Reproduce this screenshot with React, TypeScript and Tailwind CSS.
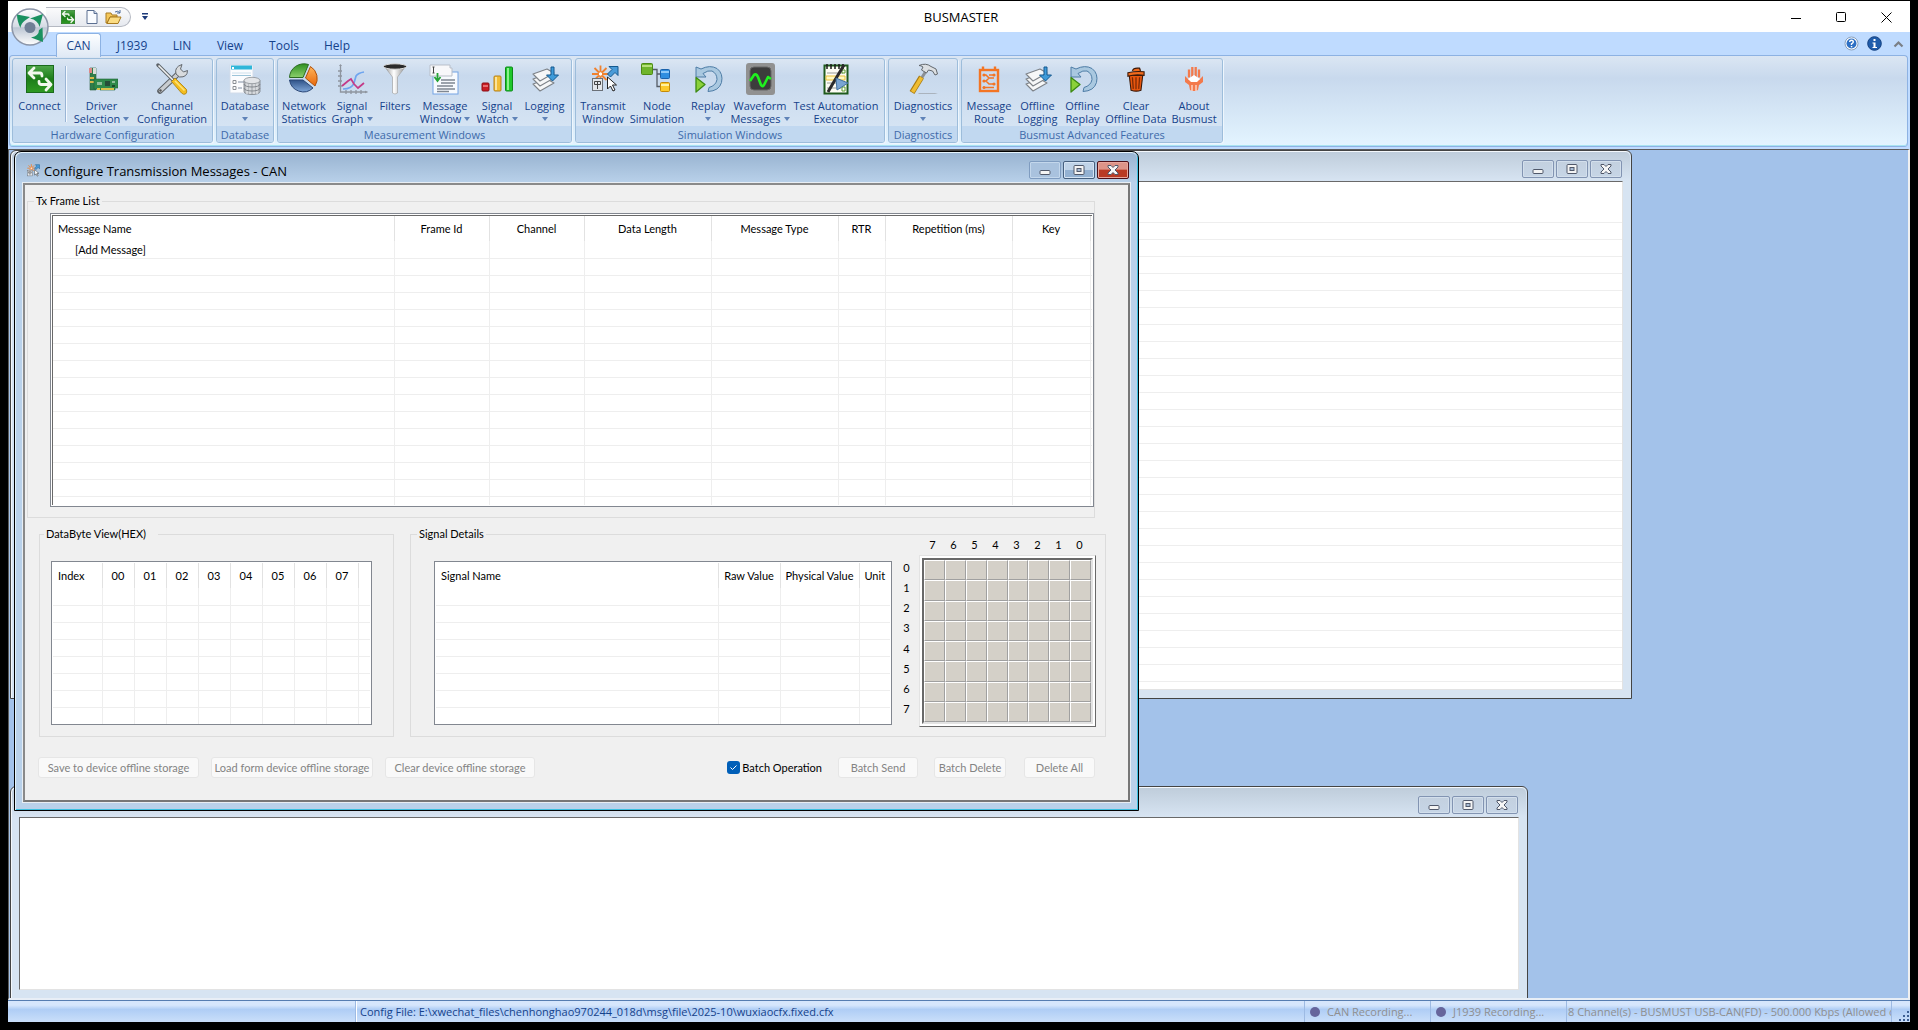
import React from "react";

/* ---------- icons ---------- */

const svgProps = (size: number) => ({ width: size, height: size, viewBox: "0 0 32 32", "aria-hidden": true as const });

function ConnectIcon({ size = 32 }: { size?: number }) {
  return (
    <svg {...svgProps(size)}>
      <defs>
        <linearGradient id="cg" x1="0" y1="0" x2="0" y2="1">
          <stop offset="0" stopColor="#4fa64a" /><stop offset=".5" stopColor="#1c7d1a" /><stop offset="1" stopColor="#2f9a22" />
        </linearGradient>
      </defs>
      <rect x="2.5" y="2.5" width="27" height="27" fill="url(#cg)" stroke="#1a6a1c" />
      <g fill="none" stroke="#f2f8ee" strokeWidth="2.8" strokeLinecap="round" strokeLinejoin="round">
        <path d="M10 5 L5 10 L10 15 M5.500 10 H16 Q18 10 18 13" />
        <path d="M22 16 L27 21.500 L22 27 M26.500 21.500 H17 Q15 21.500 15 18.500" />
      </g>
    </svg>
  );
}

function DriverIcon() {
  return (
    <svg {...svgProps(32)}>
      <path d="M4 5h6v22H4z" fill="#2f7d4b" stroke="#285f3b" strokeWidth=".6" />
      <path d="M3 5h3v5H3z" fill="#d88" /><path d="M7 5h3v6H7z" fill="#d8ded8" />
      <path d="M4 14h4v2H4zM4 18h4v2H4z" fill="#d9b84a" />
      <path d="M8 16h24v9h-3v2H14v-1H8z" fill="#2f8a4b" stroke="#1f6235" strokeWidth=".6" />
      <rect x="19" y="18" width="5" height="5" fill="#264e38" /><rect x="11" y="19" width="5" height="3" fill="#8fbf9a" />
      <rect x="26" y="18" width="3" height="2" fill="#8fbf9a" /><rect x="26" y="22" width="3" height="2" fill="#1b4d2c" />
      <path d="M15 25h13v2H15z" fill="#d9c24a" /><path d="M11 25h3v2h-3z" fill="#d9c24a" />
    </svg>
  );
}

function ToolsIcon() {
  return (
    <svg {...svgProps(32)}>
      <path d="M4 28 L23 10" stroke="#5d6267" strokeWidth="5.600" strokeLinecap="round" />
      <path d="M4.500 27.500 L23 10" stroke="#c8ccd0" strokeWidth="3.600" strokeLinecap="round" />
      <path d="M20 11 q-2-7 6-9.500 l-1.500 4.500 3 3 4-1.500 q0 7-8 6.500z" fill="#d8dbde" stroke="#63686d" />
      <circle cx="4.500" cy="27.500" r="1.200" fill="#555" />
      <path d="M2 2 L17 17" stroke="#5d6267" strokeWidth="3.400" strokeLinecap="round" />
      <path d="M2.500 2.500 L17 17" stroke="#f0f1f2" strokeWidth="1.600" />
      <path d="M15.500 18.500 l3.500-3.500 11.500 11.500 q1 3-1 4.500 q-2 1-4-1z" fill="#f4bd1e" stroke="#a97d0a" strokeWidth=".8" />
      <path d="M19 18 l9.500 9.500" stroke="#fde37a" strokeWidth="1.600" />
    </svg>
  );
}

function DatabaseIcon() {
  return (
    <svg {...svgProps(32)}>
      <rect x="1" y="2" width="23" height="28" fill="#fbfcfe" stroke="#d2dcea" />
      <rect x="2" y="2.500" width="21" height="4" fill="#2fb6d9" /><rect x="3" y="4" width="2" height="2" fill="#fff" />
      <g fill="none" stroke="#9cc4d9"><path d="M3 9.500h19M3 12.500h19" /></g>
      <rect x="3" y="9" width="19" height="2" fill="#e4eef5" />
      <g fill="#fff" stroke="#8a8f95"><path d="M4 17.500h3v3H4zM4 23.500h3v3H4z" /></g>
      <path d="M9 19h7M9 25h4" stroke="#aab4c2" strokeWidth="1.500" />
      <path d="M15 17.500v11c0 4 16 4 16 0v-11z" fill="#b9bdc2" stroke="#7a7f85" strokeWidth=".8" />
      <path d="M18 18v13M21 18v13M25 18v13M28 18v13" stroke="#f4f5f6" strokeWidth="1" />
      <g fill="none" stroke="#7a7f85" strokeWidth=".9"><path d="M15 21c0 4 16 4 16 0M15 25c0 4 16 4 16 0" /></g>
      <ellipse cx="23" cy="17.500" rx="8" ry="3.200" fill="#e3e5e8" stroke="#8b9096" strokeWidth=".8" />
    </svg>
  );
}

function PieIcon() {
  return (
    <svg {...svgProps(32)}>
      <defs>
        <linearGradient id="pg" x1="0" y1="0" x2="0" y2="1"><stop offset="0" stopColor="#2f9020" /><stop offset="1" stopColor="#8bd06c" /></linearGradient>
        <linearGradient id="po" x1="0" y1="0" x2="0" y2="1"><stop offset="0" stopColor="#ffb45a" /><stop offset="1" stopColor="#e8680c" /></linearGradient>
        <linearGradient id="pb" x1="0" y1="0" x2="0" y2="1"><stop offset="0" stopColor="#2f5288" /><stop offset="1" stopColor="#7fa6d8" /></linearGradient>
      </defs>
      <path d="M1.500 14.500 A14.500 14 0 0 1 20.500 1.500 L15 14.500z" fill="url(#pg)" stroke="#2c6a22" />
      <path d="M22.500 3.500 A14 14 0 0 1 27 23 L17.500 15z" fill="url(#po)" stroke="#b0500a" />
      <path d="M1.500 17 H15 L25 25 A14 14 0 0 1 1.500 17z" fill="url(#pb)" stroke="#2a4676" />
    </svg>
  );
}

function GraphIcon() {
  return (
    <svg {...svgProps(32)}>
      <g stroke="#8e959f" fill="none" strokeWidth="1.300">
        <path d="M4.500 2v27h27M2 8h4M2 13h4M2 18h4M2 23h4M10 27v4M15 27v4M20 27v4M25 27v4" />
      </g>
      <path d="M3 3l1.500-2L6 3zM29 27.500l2 1.500-2 1.500z" fill="#8e959f" />
      <path d="M7 26 Q16 26 18 20 L20 13 Q22 10 28 9" stroke="#6ea5ef" strokeWidth="1.700" fill="none" />
      <path d="M6 23 L12 18 L15 16 L18 21 L22 25 L28 20" stroke="#c43a87" strokeWidth="1.700" fill="none" />
    </svg>
  );
}

function FilterIcon() {
  return (
    <svg {...svgProps(32)}>
      <defs>
        <linearGradient id="fg"><stop offset="0" stopColor="#8f8f8f" /><stop offset=".45" stopColor="#fff" /><stop offset="1" stopColor="#8a8a8a" /></linearGradient>
      </defs>
      <path d="M5 3 L13.500 14 V30 Q16 32 18.500 30 V14 L27 3z" fill="url(#fg)" stroke="#9a9a9a" strokeWidth=".6" />
      <ellipse cx="16" cy="3.500" rx="11.500" ry="2.700" fill="#2b2b2b" stroke="#dcdcdc" />
    </svg>
  );
}

function MessageIcon() {
  return (
    <svg {...svgProps(32)}>
      <rect x="4" y="9" width="25" height="22" fill="#f7fafe" stroke="#74a4e4" />
      <g stroke="#7f8791" strokeWidth="1.300"><path d="M12 17h14M12 20h14M8 23h16M8 26h18M8 28.500h12" /></g>
      <path d="M1 2h20v3h2v8H1z" fill="#f8f8fa" stroke="#b9bfc9" />
      <path d="M4.500 4v6M3.500 4h2M3.500 10h2" stroke="#444" />
      <path d="M8.500 10v7M5.500 14l3 4 3-4" stroke="#25a336" strokeWidth="1.800" fill="none" />
    </svg>
  );
}

function BarsIcon() {
  return (
    <svg {...svgProps(32)}>
      <rect x="1" y="20" width="7" height="8" rx="1" fill="#c91d24" stroke="#8c0f14" />
      <path d="M2 23h5" stroke="#f08a8a" strokeWidth="1.500" />
      <rect x="13" y="13" width="7" height="15" rx="1" fill="#f2bd35" stroke="#b5811a" />
      <path d="M15 14v13" stroke="#fbe39b" strokeWidth="2" />
      <rect x="24.500" y="4" width="7" height="24" rx="1" fill="#1fc72c" stroke="#0d8a18" />
      <path d="M27 5v22" stroke="#8af08d" strokeWidth="2" />
    </svg>
  );
}

function LogIcon() {
  return (
    <svg {...svgProps(32)}>
      <g transform="translate(2 1)">
        <g fill="#f6f7f8" stroke="#7d8288" strokeWidth="1.100" strokeLinejoin="round">
          <path d="M2 20 L16 15 L23 19 L9 27z" /><path d="M2 15 L16 10 L23 14 L9 22z" /><path d="M2 10 L16 5 L23 9 L9 17z" />
        </g>
        <path d="M20 3h3v8h4.500L21.500 17l-6-6H20z" fill="#3f9bd9" stroke="#14598f" strokeLinejoin="round" />
      </g>
    </svg>
  );
}

function TransmitIcon({ size = 32 }: { size?: number }) {
  return (
    <svg {...svgProps(size)}>
      <g stroke="#f0812e" strokeWidth="1.800"><path d="M13.500 2.500v17M5 11h17M7.500 5l12 12M19.500 5l-12 12" /></g>
      <circle cx="13.500" cy="11" r="2.200" fill="#fff" stroke="#f0812e" />
      <path d="M22 3.500h9v9l-3-3-4.500 4.500-3-3 4.500-4.500z" fill="#4a9bd8" stroke="#14598f" strokeLinejoin="round" />
      <rect x="5.500" y="15.500" width="10" height="12" fill="#e3e6ea" stroke="#6b7178" />
      <path d="M7.500 18.500h6v3h-6zM10.500 18v8" stroke="#444" fill="none" />
      <path d="M20.500 14v12l3-3 2.500 5 2-1-2.500-5h4z" fill="#fff" stroke="#222" />
    </svg>
  );
}

function NodeIcon() {
  return (
    <svg {...svgProps(32)}>
      <path d="M12 6.500h4v17h4M16 11h4" stroke="#555c66" fill="none" strokeWidth="1.300" />
      <rect x=".5" y=".5" width="11" height="11" rx="1" fill="#6fb52c" stroke="#4c8a14" /><path d="M1 3h10" stroke="#b6e07c" strokeWidth="2" />
      <rect x="19.500" y="6.500" width="9" height="9" rx="1" fill="#2f8ee0" stroke="#1b62ab" /><path d="M20 9h8" stroke="#8cc8f8" strokeWidth="2" />
      <rect x="19.500" y="19.500" width="9" height="9" rx="1" fill="#fcca2b" stroke="#c48a08" /><path d="M20 22h8" stroke="#fff0a0" strokeWidth="2" />
    </svg>
  );
}

function ReplayIcon() {
  return (
    <svg {...svgProps(32)}>
      <path d="M4 4v10h10l-3-3.500q5-3.500 9-2.500 5 2.500 5 8.500-1 6-8 8l-1 4q11-.5 13.500-9 2-9-4.500-14-7-4-16 .500z" fill="#a9c8e0" stroke="#4e7da6" strokeLinejoin="round" />
      <path d="M4 14.500 L13 21.500 L4 29z" fill="#8bd13a" stroke="#3c8a12" strokeWidth="1.300" strokeLinejoin="round" />
    </svg>
  );
}

function WaveIcon() {
  return (
    <svg {...svgProps(32)}>
      <rect x="2" y="0" width="29" height="32" rx="3" fill="#919191" />
      <rect x="6" y="4" width="21" height="23" rx="4" fill="#3c3c3c" stroke="#666" />
      <path d="M6 18 L10 12 Q12 10 14 14 L17 22 Q19 25 21 20 L24 14 L27 16" stroke="#1ff01f" strokeWidth="2.600" fill="none" strokeLinejoin="round" />
    </svg>
  );
}

function TestIcon() {
  return (
    <svg {...svgProps(32)}>
      <rect x="4.500" y="2.500" width="23" height="28" fill="#fcfcf4" stroke="#1e5a1c" strokeWidth="2" />
      <path d="M7 1v5M11 1v5M15 1v5M19 1v5M23 1v5" stroke="#1a1a1a" strokeWidth="1.500" />
      <path d="M7 10h16M7 20h14M7 25h14" stroke="#b9bcb6" strokeWidth="1.500" />
      <path d="M6 13h19v4H6z" fill="#fff9c2" stroke="#e9c03a" />
      <path d="M22 24h3v4h-3z" fill="#fff" stroke="#5a9a2a" /><path d="M22 7h3v3h-3z" fill="#fff" stroke="#5a9a2a" />
      <path d="M24 2 L12 22 L8 29" stroke="#2b2b2b" strokeWidth="3" fill="none" />
      <path d="M16 15 L28 20 L17 27z" fill="#7aa5d2" stroke="#41719f" />
    </svg>
  );
}

function HammerIcon() {
  return (
    <svg {...svgProps(32)}>
      <path d="M12 30h16l3 1H11z" fill="#aab3bd" />
      <path d="M19 8 L14 16" stroke="#8b9096" strokeWidth="3" />
      <path d="M14.500 14 L5 29.500" stroke="#a87a10" strokeWidth="5.600" />
      <path d="M14.500 14.500 L5.500 29" stroke="#f0bd32" strokeWidth="3.800" />
      <path d="M12 2.500q7-3 12 1l5 2.500 1.500 5-2.500 1-2.500-4-4-1-2 3-5-3 1.500-3q-2-1.500-4-1.500z" fill="#dcdfe2" stroke="#63686d" strokeLinejoin="round" />
    </svg>
  );
}

function RouteIcon() {
  return (
    <svg {...svgProps(32)}>
      <rect x="7" y="7" width="18" height="21" fill="none" stroke="#f37524" strokeWidth="2.400" />
      <path d="M10 3.500v4M22 3.500v4" stroke="#f37524" strokeWidth="2.400" />
      <g stroke="#f37524" strokeWidth="1.500" fill="none"><path d="M10 12h3l3 3h5M10 18h3l3-3M10 18h3l3 3h5M10 24.500h11M16 12h5" /></g>
      <g fill="#f37524"><circle cx="11" cy="12" r="1.600" /><circle cx="11" cy="18" r="1.600" /><circle cx="11" cy="24.500" r="1.600" /><circle cx="21" cy="12" r="1.600" /><circle cx="21" cy="21" r="1.600" /></g>
    </svg>
  );
}

function TrashIcon() {
  return (
    <svg {...svgProps(32)}>
      <g transform="translate(1.600 1.600) scale(.9)">
        <path d="M8.500 12h15l-2 16.500q-5 2-11 0z" fill="#e8560e" stroke="#3a1808" strokeWidth="1.200" />
        <path d="M12 14l1 13M16 14v13.500M20 14l-1 13" stroke="#7a2a06" strokeWidth="1.400" />
        <path d="M7 9q9-2 18-1v4q-9-2-18 1z" fill="#f06a1c" stroke="#3a1808" strokeWidth="1.200" />
        <path d="M12 7q1-4 8-3l1 3" fill="#f06a1c" stroke="#3a1808" strokeWidth="1.400" />
      </g>
    </svg>
  );
}

function BusmustIcon() {
  return (
    <svg {...svgProps(32)}>
      <path d="M11 6.500v8M14.300 4v10M17.700 4v10M21 6.500v8" stroke="#f37a4c" strokeWidth="2.300" />
      <path d="M7 13l4 4h10l4-4v6l-4 3-1 5-2 1h-4l-2-1-1-5-4-3z" fill="#f37a4c" />
      <path d="M10 16l6-4 6 4-3 3h-6z" fill="#fff" />
      <path d="M14 22v6M18 22v6" stroke="#fff" />
    </svg>
  );
}

function Orb() {
  return (
    <svg width="40" height="40" viewBox="0 0 40 40" role="img" aria-label="BUSMASTER menu">
      <defs>
        <linearGradient id="orb" x1="0" y1="0" x2="0" y2="1">
          <stop offset="0" stopColor="#fdfdfe" /><stop offset=".5" stopColor="#d4dae4" /><stop offset=".52" stopColor="#bcc6d4" /><stop offset="1" stopColor="#fff" />
        </linearGradient>
      </defs>
      <circle cx="20" cy="20" r="18" fill="url(#orb)" stroke="#8b95a8" strokeWidth="1.500" />
      <g fill="#1a9160"><path d="M7 7.500 L20 10 L15 13.500 Q11 16 10.500 21 Q7 14 7 7.500z" /><path d="M20 11.500 L33 7 L29.500 20 Q28 13 20 11.500z" /><path d="M32.500 20.500 L33 35 L21 30.500 Q29 29 29 23z" /></g>
      <circle cx="20" cy="20.500" r="5.500" fill="#6f7f96" />
    </svg>
  );
}

function NewIcon() {
  return (
    <svg width="16" height="16" viewBox="0 0 16 16" aria-hidden="true">
      <path d="M3 1.500h7l3 3v10H3z" fill="#fafcff" stroke="#5b6f91" /><path d="M10 1.500v3h3" fill="#c9d6ea" stroke="#5b6f91" />
    </svg>
  );
}

function OpenIcon() {
  return (
    <svg width="17" height="16" viewBox="0 0 17 16" aria-hidden="true">
      <path d="M1 4h5l1 2h5v2H5l-3 6H1z" fill="#f4c75a" stroke="#a87a20" /><path d="M5 8h11l-3 6.500H2z" fill="#fbdc83" stroke="#a87a20" />
      <path d="M10 3q3-2 5 1M15 1v3h-3" fill="none" stroke="#4b6a9a" />
    </svg>
  );
}

/* ---------- ribbon ---------- */

function Caret() {
  return (
    <svg className="inline-block" width="6" height="4" viewBox="0 0 6 4" aria-hidden="true"><path d="M0 0h6L3 4z" fill="#5f83b8" /></svg>
  );
}

type Item = { icon: React.ReactNode; a: string; b?: string; caret?: boolean; w: string };

function RibbonButton({ icon, a, b, caret, w }: Item) {
  return (
    <button type="button" className={`flex flex-col items-center text-[11px] leading-[13px] text-[#15428b] ${w}`}>
      <span className="mb-1 h-8">{icon}</span>
      <span className="whitespace-nowrap">{a}</span>
      <span className="flex h-[13px] items-center gap-[3px] whitespace-nowrap">{b}{caret && <Caret />}</span>
    </button>
  );
}

function RibbonGroup({ title, w, items, divider }: { title: string; w: string; items: Item[]; divider?: boolean }) {
  return (
    <section aria-label={title} className={`flex h-[85px] flex-col rounded-[3px] border border-[#9dbddb] bg-linear-to-b from-[#dbe6f3] from-0% via-[#c8d9ed] via-20% to-[#d9e7f5] shadow-[1px_1px_0_#eef6fd] ${w}`}>
      <div className="flex flex-1 justify-center pt-1">
        {items.map((it, i) => (
          <React.Fragment key={it.a + i}>
            <RibbonButton {...it} />
            {divider && i === 0 && <span className="mt-[3px] mr-1 h-14 w-px bg-[#9ab5d5] shadow-[1px_0_0_#f4f9ff]" />}
          </React.Fragment>
        ))}
      </div>
      <h2 className="h-4 rounded-b-[2px] bg-[#c1d8f0] text-center text-[11px] leading-[17px] text-[#3e6aaa]">{title}</h2>
    </section>
  );
}

const groups: { title: string; w: string; divider?: boolean; items: Item[] }[] = [
  {
    title: "Hardware Configuration", w: "w-[201px]", divider: true,
    items: [
      { icon: <ConnectIcon />, a: "Connect", w: "w-[51px]" },
      { icon: <DriverIcon />, a: "Driver", b: "Selection", caret: true, w: "w-[63px]" },
      { icon: <ToolsIcon />, a: "Channel", b: "Configuration", w: "w-[78px]" },
    ],
  },
  { title: "Database", w: "w-[58px]", items: [{ icon: <DatabaseIcon />, a: "Database", caret: true, w: "w-[54px]" }] },
  {
    title: "Measurement Windows", w: "w-[295px]",
    items: [
      { icon: <PieIcon />, a: "Network", b: "Statistics", w: "w-[50px]" },
      { icon: <GraphIcon />, a: "Signal", b: "Graph", caret: true, w: "w-[46px]" },
      { icon: <FilterIcon />, a: "Filters", w: "w-[40px]" },
      { icon: <MessageIcon />, a: "Message", b: "Window", caret: true, w: "w-[60px]" },
      { icon: <BarsIcon />, a: "Signal", b: "Watch", caret: true, w: "w-[44px]" },
      { icon: <LogIcon />, a: "Logging", caret: true, w: "w-[51px]" },
    ],
  },
  {
    title: "Simulation Windows", w: "w-[310px]",
    items: [
      { icon: <TransmitIcon />, a: "Transmit", b: "Window", w: "w-[48px]" },
      { icon: <NodeIcon />, a: "Node", b: "Simulation", w: "w-[60px]" },
      { icon: <ReplayIcon />, a: "Replay", caret: true, w: "w-[42px]" },
      { icon: <WaveIcon />, a: "Waveform", b: "Messages", caret: true, w: "w-[62px]" },
      { icon: <TestIcon />, a: "Test Automation", b: "Executor", w: "w-[90px]" },
    ],
  },
  { title: "Diagnostics", w: "w-[70px]", items: [{ icon: <HammerIcon />, a: "Diagnostics", caret: true, w: "w-[66px]" }] },
  {
    title: "Busmust Advanced Features", w: "w-[262px]",
    items: [
      { icon: <RouteIcon />, a: "Message", b: "Route", w: "w-[50px]" },
      { icon: <LogIcon />, a: "Offline", b: "Logging", w: "w-[47px]" },
      { icon: <ReplayIcon />, a: "Offline", b: "Replay", w: "w-[43px]" },
      { icon: <TrashIcon />, a: "Clear", b: "Offline Data", w: "w-[64px]" },
      { icon: <BusmustIcon />, a: "About", b: "Busmust", w: "w-[52px]" },
    ],
  },
];

/* ---------- MDI windows ---------- */

function GlyphMin() {
  return <svg width="12" height="12" viewBox="0 0 12 12" aria-hidden="true"><rect x="1" y="6.500" width="10" height="4" rx="1" fill="#f4f4f4" stroke="#50586a" /></svg>;
}
function GlyphMax() {
  return <svg width="12" height="12" viewBox="0 0 12 12" aria-hidden="true"><rect x="1" y="1.500" width="10" height="9" rx="1" fill="#f4f4f4" stroke="#50586a" /><rect x="4" y="4.500" width="4" height="3" fill="#a9bdd6" stroke="#50586a" /></svg>;
}
function GlyphClose() {
  return (
    <svg width="12" height="12" viewBox="0 0 12 12" aria-hidden="true">
      <path d="M1 1.500h3l2 2 2-2h3v1.500l-3 3 3 3v1.500H8l-2-2-2 2H1V9l3-3-3-3z" fill="#f6f6f6" stroke="#50586a" />
    </svg>
  );
}

function CaptionButtons({ active }: { active?: boolean }) {
  const base = "flex h-[18px] w-8 items-center justify-center rounded-[2px] border ";
  const idle = "border-[#8294b2] bg-linear-to-b from-[#c3d0df] to-[#c6d5e6] shadow-[inset_0_0_0_1px_#d3dfec]";
  return (
    <div className="flex gap-[2px]">
      <button type="button" aria-label="Minimize" className={base + (active ? "border-[#7f9cc0] bg-[#a9c2de] shadow-[inset_0_0_0_1px_#c3d7ec]" : idle)}><GlyphMin /></button>
      <button type="button" aria-label="Maximize" className={base + (active ? "border-[#46607f] bg-linear-to-b from-[#bfd3e8] from-50% to-[#93b1d2] to-50% shadow-[inset_0_0_0_1px_#d5e4f4]" : idle)}><GlyphMax /></button>
      <button type="button" aria-label="Close" className={base + (active ? "border-[#4d1018] bg-linear-to-b from-[#dd9488] from-45% to-[#b93a24] to-50% shadow-[inset_0_0_0_1px_#e8a79d]" : idle)}><GlyphClose /></button>
    </div>
  );
}

function IdleWindow({ place, label, children }: { place: string; label: string; children?: React.ReactNode }) {
  return (
    <section aria-label={label} className={`absolute flex flex-col rounded-t-[6px] border border-[#444] bg-[#d7e4f2] px-2 pb-2 shadow-[inset_1px_1px_0_#f4f8fc] ${place}`}>
      <header className="-mx-[7px] mt-px flex h-[29px] shrink-0 justify-end rounded-t-[5px] bg-linear-to-b from-[#bfcddb] to-[#d7e4f2] px-2 pt-2">
        <CaptionButtons />
      </header>
      <div className="flex-1 overflow-hidden border border-[#696969] border-r-[#e3e3e3] border-b-[#e3e3e3] bg-white">{children}</div>
    </section>
  );
}

type Col = { label: string; w: string; center?: boolean };

function Grid({ cols, rows, first, label, pad = "px-[5px]" }: { cols: Col[]; rows: number; first?: string; label: string; pad?: string }) {
  return (
    <table aria-label={label} className="w-full table-fixed border-collapse text-[11px] leading-4">
      <colgroup>{cols.map((c, i) => <col key={i} className={c.w} />)}</colgroup>
      <thead>
        <tr className="h-[25px]">
          {cols.map((c, i) => (
            <th key={i} scope="col" className={`border-r border-[#e2e2e2] p-0 font-normal whitespace-nowrap last:border-r-0 ${c.center ? "text-center" : `text-left ${pad}`}`}>{c.label}</th>
          ))}
        </tr>
      </thead>
      <tbody>
        {Array.from({ length: rows }, (_, r) => (
          <tr key={r} className="h-[17px]">
            {cols.map((_, i) => (
              <td key={i} className="border-r border-b border-[#eee] p-0 last:border-r-0">
                {r === 0 && i === 0 && first ? <span className="block h-4 pl-[22px] leading-[17px]">{first}</span> : null}
              </td>
            ))}
          </tr>
        ))}
      </tbody>
    </table>
  );
}

const frameCols: Col[] = [
  { label: "Message Name", w: "w-[341px]" },
  { label: "Frame Id", w: "w-[95px]", center: true },
  { label: "Channel", w: "w-[95px]", center: true },
  { label: "Data Length", w: "w-[127px]", center: true },
  { label: "Message Type", w: "w-[127px]", center: true },
  { label: "RTR", w: "w-[47px]", center: true },
  { label: "Repetition (ms)", w: "w-[127px]", center: true },
  { label: "Key", w: "w-[78px]", center: true },
  { label: "", w: "w-[2px]" },
];

const byteCols: Col[] = [
  { label: "Index", w: "w-[49px]" },
  ...["00", "01", "02", "03", "04", "05", "06", "07"].map((label) => ({ label, w: "w-[32px]", center: true })),
  { label: "", w: "w-auto" },
];

const signalCols: Col[] = [
  { label: "Signal Name", w: "w-[282px]" },
  { label: "Raw Value", w: "w-[62px]", center: true },
  { label: "Physical Value", w: "w-[79px]", center: true },
  { label: "Unit", w: "w-[31px]", center: true },
];

function PushButton({ children, w }: { children: string; w: string }) {
  return (
    <button type="button" disabled className={`h-[21px] rounded-[3px] border border-[#e6e6e6] bg-[#f9f9f9] text-center whitespace-nowrap text-[#838383] ${w}`}>{children}</button>
  );
}

const bits = ["7", "6", "5", "4", "3", "2", "1", "0"];
const bytes = ["0", "1", "2", "3", "4", "5", "6", "7"];

function BitMatrix() {
  return (
    <div className="-mt-[5px] ml-1 flex w-[204px] flex-col">
      <div className="ml-[23px] grid h-4 grid-cols-8 pr-[10px] pl-[3px] text-center leading-4">
        {bits.map((b) => <span key={b}>{b}</span>)}
      </div>
      <div className="mt-[2px] flex">
        <div className="grid w-[21px] grid-rows-8 pt-[3px] pb-[8px] text-center leading-5">
          {bytes.map((b) => <span key={b}>{b}</span>)}
        </div>
        <div className="ml-[2px] h-[172px] w-[177px] border border-t-[#e3e3e3] border-r-[#696969] border-b-[#696969] border-l-[#e3e3e3] bg-white p-[2px]">
          <div className="grid h-full grid-cols-8 grid-rows-8 border-2 border-t-[#696969] border-r-[#e3e3e3] border-b-[#e3e3e3] border-l-[#696969]">
            {Array.from({ length: 64 }, (_, i) => (
              <span key={i} className="border-t border-r border-b border-l border-t-white border-r-[#a0a0a0] border-b-[#a0a0a0] border-l-white bg-[#d4d0c8]" />
            ))}
          </div>
        </div>
      </div>
    </div>
  );
}

function TransmitDialog() {
  return (
    <section role="dialog" aria-label="Configure Transmission Messages - CAN" className="absolute top-px left-[5px] flex h-[660px] w-[1125px] flex-col rounded-t-[7px] border border-black bg-[#b9d1ea] px-2 pb-2 shadow-[inset_1px_1px_0_#e4f3fb,inset_-1px_-1px_0_#3cc0e0]">
      <header className="-mx-[7px] mt-px flex h-[30px] shrink-0 items-start rounded-t-[6px] bg-linear-to-b from-[#99b4d1] to-[#b9d1ea] px-2 pt-2">
        <span className="ml-px mt-[2px]"><TransmitIcon size={15} /></span>
        <h1 className="ml-1 flex-1 text-[13px] leading-5 text-black">Configure Transmission Messages - CAN</h1>
        <CaptionButtons active />
      </header>
      <div className="flex flex-1 flex-col border-2 border-t-[#8a8a8a] border-r-[#777] border-b-[#777] border-l-[#8a8a8a] bg-[#f0f0f0] font-[Lato,'Open_Sans',sans-serif] text-[11px] leading-4 text-black shadow-[0_0_0_1px_#e8eef4]">
        <fieldset className="mt-2 ml-[2px] h-[325px] w-[1068px] border border-[#dcdcdc]">
          <legend className="ml-[6px] px-[2px]">Tx Frame List</legend>
          <div className="mt-1 ml-[22px] h-[294px] w-[1044px] overflow-hidden border border-[#828790] bg-white p-px">
            <div className="h-full overflow-hidden border-t border-l border-[#696969]">
              <Grid label="Tx frame list" cols={frameCols} rows={16} first="[Add Message]" />
            </div>
          </div>
        </fieldset>
        <div className="mt-2 ml-[14px] flex gap-4">
          <fieldset className="h-[211px] w-[355px] border border-[#dcdcdc]">
            <legend className="ml-1 pr-3 pl-[2px]">DataByte View(HEX)</legend>
            <div className="mt-[19px] ml-[11px] h-[164px] w-[321px] overflow-hidden border border-[#828790] bg-white p-px">
              <Grid label="Data bytes" cols={byteCols} rows={8} />
            </div>
          </fieldset>
          <fieldset className="h-[211px] w-[696px] border border-[#dcdcdc]">
            <legend className="ml-[6px] px-[2px]">Signal Details</legend>
            <div className="flex">
              <div className="mt-[19px] ml-[23px] h-[164px] w-[458px] overflow-hidden border border-[#828790] bg-white p-px">
                <Grid label="Signals" cols={signalCols} rows={8} />
              </div>
              <BitMatrix />
            </div>
          </fieldset>
        </div>
        <div className="mt-5 ml-[13px] flex w-[1057px] items-center">
          <PushButton w="w-[161px]">Save to device offline storage</PushButton>
          <span className="w-3" />
          <PushButton w="w-[162px]">Load form device offline storage</PushButton>
          <span className="w-3" />
          <PushButton w="w-[150px]">Clear device offline storage</PushButton>
          <label className="ml-auto flex items-center gap-[2px]">
            <span className="relative flex size-[13px]">
              <input type="checkbox" defaultChecked className="size-[13px] appearance-none rounded-[3px] bg-[#005fb8]" />
              <svg className="pointer-events-none absolute inset-0" width="13" height="13" viewBox="0 0 13 13" aria-hidden="true"><path d="M3.500 6.500l2 2 4-4" stroke="#fff" fill="none" /></svg>
            </span>
            Batch Operation
          </label>
          <span className="w-4" />
          <PushButton w="w-[80px]">Batch Send</PushButton>
          <span className="w-4" />
          <PushButton w="w-[72px]">Batch Delete</PushButton>
          <span className="w-[18px]" />
          <PushButton w="w-[71px]">Delete All</PushButton>
        </div>
      </div>
    </section>
  );
}

/* ---------- page ---------- */

const menuTabs = [
  { label: "J1939", w: "w-[54px]" },
  { label: "LIN", w: "w-[46px]" },
  { label: "View", w: "w-[50px]" },
  { label: "Tools", w: "w-[58px]" },
  { label: "Help", w: "w-[48px]" },
];

export default function App() {
  return (
    <div className="flex h-screen flex-col overflow-hidden bg-black px-2 pt-px pb-2 font-['Open_Sans','Noto_Sans',sans-serif]">
      <header className="relative grid h-[31px] shrink-0 grid-cols-[1fr_auto_1fr] bg-white">
        <div className="flex pl-[38px]">
          <div className="mt-[6px] flex h-5 items-center gap-2 rounded-r-full border border-l-0 border-[#b5b9c2] bg-linear-to-b from-[#fbfbfc] to-[#e6e9ef] pr-2 pl-[14px]">
            <button type="button" aria-label="Connect"><ConnectIcon size={16} /></button>
            <button type="button" aria-label="New"><NewIcon /></button>
            <button type="button" aria-label="Open" className="-ml-[3px]"><OpenIcon /></button>
          </div>
          <button type="button" aria-label="Customize toolbar" className="ml-[11px] h-[32px]">
            <svg width="6" height="8" viewBox="0 0 6 8" aria-hidden="true"><path d="M0 0h6v1.500H0zM0 3h6L3 7z" fill="#1c3a7a" /></svg>
          </button>
        </div>
        <h1 className="pl-1 text-[13px] leading-[33px] text-black">BUSMASTER</h1>
        <div className="flex items-center justify-end gap-[34px] pr-[18px]">
          <button type="button" aria-label="Minimize window"><svg width="11" height="11" viewBox="0 0 11 11"><path d="M0 6.500h10" stroke="#000" /></svg></button>
          <button type="button" aria-label="Maximize window"><svg width="11" height="11" viewBox="0 0 11 11"><rect x=".5" y=".5" width="9" height="9" rx="1" fill="none" stroke="#000" /></svg></button>
          <button type="button" aria-label="Close window"><svg width="11" height="11" viewBox="0 0 11 11"><path d="M.5.5l10 10M10.500.5l-10 10" stroke="#000" /></svg></button>
        </div>
        <button type="button" aria-label="Application menu" className="absolute top-[6px] left-[2px] z-10"><Orb /></button>
      </header>

      <nav className="flex h-[23px] shrink-0 bg-[#bfdbff] pl-12 text-[12px] leading-[27px] text-[#15428b]">
        <button type="button" className="relative mt-px h-6 w-[45px] rounded-t-[3px] border border-b-0 border-[#8db2e3] bg-linear-to-b from-[#fdfeff] to-[#dfe9f5] leading-[24px]">CAN</button>
        <span className="w-1" />
        {menuTabs.map((t) => <button key={t.label} type="button" className={t.w}>{t.label}</button>)}
        <div className="ml-auto flex items-center gap-2 pr-[6px]">
          <button type="button" aria-label="Help"><svg width="15" height="15" viewBox="0 0 15 15"><circle cx="7.500" cy="7.500" r="6.500" fill="#fff" stroke="#8aa0bc" /><circle cx="7.500" cy="7.500" r="5" fill="#2d6fc4" /><path d="M5.700 6q0-1.800 1.800-1.800T9.300 6q0 1-1.800 1.800V9" stroke="#fff" strokeWidth="1.400" fill="none" /><path d="M6.800 10h1.500v1.300H6.800z" fill="#fff" /></svg></button>
          <button type="button" aria-label="About"><svg width="15" height="15" viewBox="0 0 15 15"><circle cx="7.500" cy="7.500" r="6.800" fill="#1f5cab" stroke="#123f80" /><path d="M6.500 3h2v2h-2zM5.500 6.500h3V11H10v1H5.500v-1h1V7.500h-1z" fill="#fff" /></svg></button>
          <button type="button" aria-label="Collapse ribbon" className="ml-[3px]"><svg width="11" height="8" viewBox="0 0 11 8"><path d="M1.500 6.500l4-4 4 4" stroke="#7a7f86" strokeWidth="2.200" fill="none" /></svg></button>
        </div>
      </nav>

      <div className="shrink-0 bg-[#bfdbff] pr-[2px] pb-[3px] pl-px">
        <div className="flex h-[91px] gap-[3px] rounded-[4px] border border-[#8db2e3] border-b-[#a8e4f2] bg-linear-to-b from-[#dbe6f3] from-0% via-[#c8d9ed] via-25% to-[#e3f4ff] pt-[2px] pl-[2px] shadow-[0_1px_0_#8db2e3]">
          {groups.map((g) => <RibbonGroup key={g.title} {...g} />)}
        </div>
      </div>

      <main className="relative min-h-0 flex-1 overflow-hidden border-t border-r-2 border-b-2 border-l border-t-[#5c5c5c] border-r-[#f0f0f0] border-b-[#e8eef6] border-l-[#5c5c5c] bg-[#a3c2ea]">
        <IdleWindow label="Message window" place="top-0 left-px h-[549px] w-[1622px]">
          <div className="pt-[24px]">
            {Array.from({ length: 28 }, (_, i) => <div key={i} className="h-[17px] border-b border-[#eee]" />)}
          </div>
        </IdleWindow>
        <IdleWindow label="Output window" place="top-[636px] left-px h-[213px] w-[1518px]" />
        <TransmitDialog />
      </main>

      <footer className="flex h-[22px] shrink-0 border-t border-[#567db1] bg-linear-to-b from-[#d6e6fc] from-20% via-[#afcdf5] via-40% to-[#cadffa] text-[11px] leading-[22px] text-[#8f8f8f]">
        <div className="w-[348px] border-r border-[#9dbae3]" />
        <div className="flex-1 border-l border-white pl-[3px] text-[#15428b]">Config File: E:\xwechat_files\chenhonghao970244_018d\msg\file\2025-10\wuxiaocfx.fixed.cfx</div>
        <div className="flex w-[126px] items-center gap-[7px] border-l border-[#9dbae3] pl-[5px]"><span className="size-[10px] rounded-full bg-[#66659c]" />CAN Recording...</div>
        <div className="flex w-[136px] items-center gap-[7px] border-l border-[#9dbae3] pl-[5px]"><span className="size-[10px] rounded-full bg-[#66659c]" />J1939 Recording...</div>
        <div className="w-[326px] overflow-hidden border-r border-l border-[#9dbae3] pl-px whitespace-nowrap">8 Channel(s) - BUSMUST USB-CAN(FD) - 500.000 Kbps (Allowed o</div>
        <div className="flex w-[18px] items-end justify-end">
          <svg width="11" height="11" viewBox="0 0 11 11" aria-hidden="true"><path d="M8 0h2v2H8zM4 4h2v2H4zM8 4h2v2H8zM0 8h2v2H0zM4 8h2v2H4zM8 8h2v2H8z" fill="#3d5f93" /></svg>
        </div>
      </footer>
    </div>
  );
}
